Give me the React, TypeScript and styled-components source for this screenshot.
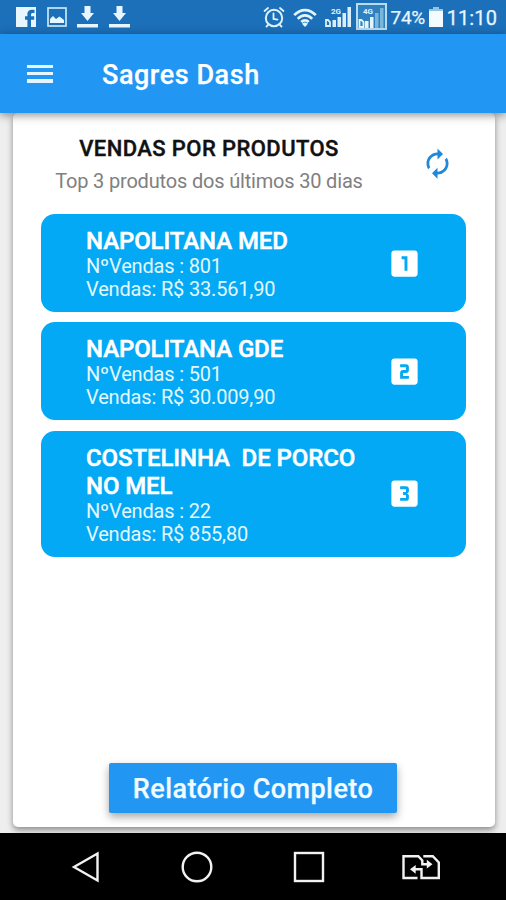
import React from "react";
import styled, { createGlobalStyle } from "styled-components";
import { MdAutorenew, MdLooks3, MdLooksOne, MdLooksTwo } from "react-icons/md";

const GlobalStyle = createGlobalStyle`
  * { box-sizing: border-box; }
  body { margin: 0; font-family: Roboto, "Liberation Sans", sans-serif; }
  svg { display: block; flex: none; }
`;

const Screen = styled.div`
  width: 506px;
  height: 900px;
  display: flex;
  flex-direction: column;
  overflow: hidden;
  background: #eeeeee;
`;

const StatusBar = styled.header`
  height: 34px;
  flex: none;
  display: flex;
  align-items: center;
  justify-content: space-between;
  padding: 0 9px 0 16px;
  background: #1b70b9;
  color: #e8f6ff;
`;

const StatusGroup = styled.div<{ $gap: number }>`
  display: flex;
  align-items: center;
  gap: ${(p) => p.$gap}px;
`;

const StatusText = styled.span<{ $size: number; $spacing: number }>`
  font-size: ${(p) => p.$size}px;
  line-height: 34px;
  letter-spacing: ${(p) => p.$spacing}px;
  padding-top: 2px;
  -webkit-text-stroke: 0.25px #e8f6ff;
`;

const AppBar = styled.nav`
  height: 79px;
  flex: none;
  display: flex;
  align-items: center;
  gap: 49px;
  padding-left: 27px;
  background: #2196f3;
  box-shadow: 0 2px 9px rgba(0, 0, 0, 0.45);
  position: relative;
  z-index: 1;
`;

const AppTitle = styled.h1`
  margin: 2px 0 0;
  font-size: 27px;
  font-weight: 500;
  line-height: 32px;
  letter-spacing: 0.55px;
  color: #fff;
  -webkit-text-stroke: 0.25px #fff;
`;

const MenuButton = styled.button`
  border: 0;
  padding: 0;
  width: 26px;
  height: 18px;
  display: flex;
  flex-direction: column;
  justify-content: space-between;
  background: none;
`;

const MenuLine = styled.span`
  height: 3.5px;
  background: #e6f5ff;
`;

const Body = styled.main`
  height: 720px;
  flex: none;
  padding: 0 11px 6px 13px;
`;

const Card = styled.section`
  height: 714px;
  display: flex;
  flex-direction: column;
  padding: 0 29px 14px 28px;
  border-radius: 5px;
  background: #fff;
  box-shadow: 0 3px 6px rgba(0, 0, 0, 0.42);
`;

const CardHeader = styled.div`
  height: 101px;
  display: flex;
  justify-content: space-between;
  padding: 22px 12px 0 13px;
`;

const Headings = styled.div`
  width: 310px;
  display: flex;
  flex-direction: column;
  align-items: center;
  white-space: nowrap;
`;

const CardTitle = styled.h2`
  margin: 0;
  font-size: 22px;
  font-weight: 500;
  line-height: 28px;
  letter-spacing: 0.42px;
  color: #111;
  -webkit-text-stroke: 0.4px #111;
`;

const CardSubtitle = styled.p`
  margin: 5px 0 0;
  font-size: 20px;
  line-height: 26px;
  letter-spacing: -0.18px;
  color: #808080;
`;

const RefreshButton = styled.button`
  border: 0;
  padding: 11px 0 0;
  height: 45px;
  background: none;
  color: #1f88d8;
`;

const ProductList = styled.ol`
  list-style: none;
  margin: 0;
  padding: 0;
  display: flex;
  flex-direction: column;
  gap: 10.4px;
`;

const ProductTile = styled.li`
  display: flex;
  align-items: center;
  justify-content: space-between;
  padding: 12px 44.5px 12px 45px;
  border-radius: 14px;
  background: #03a9f4;
  color: #fff;
`;

const ProductName = styled.h3`
  margin: 0;
  font-size: 24px;
  font-weight: 500;
  line-height: 28px;
  letter-spacing: -0.1px;
  white-space: pre-wrap;
  -webkit-text-stroke: 0.5px #fff;
`;

const ProductInfo = styled.div`
  width: 290px;
  padding-top: 1px;
  margin-bottom: -1px;
`;

const ProductStat = styled.p`
  margin: 0;
  font-size: 20px;
  line-height: 23px;
  letter-spacing: -0.17px;
  color: #e3f8ff;
`;

const ReportButton = styled.button`
  width: 288px;
  height: 50px;
  margin: auto auto 0 68px;
  padding: 2px 0 0;
  border: 0;
  border-radius: 2px;
  background: #2196f3;
  color: #f2fbff;
  font: 500 27px/32px Roboto, "Liberation Sans", sans-serif;
  letter-spacing: 0.45px;
  white-space: nowrap;
  box-shadow: 0 4px 9px rgba(0, 0, 0, 0.35);
  -webkit-text-stroke: 0.25px #f2fbff;
`;

const SystemNav = styled.footer`
  height: 67px;
  flex: none;
  display: flex;
  align-items: center;
  padding-left: 71px;
  background: #000;
  position: relative;
  z-index: 1;
`;

const NavIcon = styled.svg`
  fill: none;
  stroke: #f2f2f2;
  stroke-width: 2.4;
`;

const FacebookIcon = () => (
  <svg width="20" height="20" viewBox="0 0 20 20">
    <path fill="#e8f6ff" fillRule="evenodd" d="M0 0h20v20h-5v-7.3h3.2V9.3H15V7.7c0-1.2.6-1.7 1.8-1.7h1.7V2.7h-2.6c-3 0-4.5 1.6-4.5 4.4v2.2H9v3.4h2.4V20H0z" />
  </svg>
);

const PictureIcon = () => (
  <svg width="20" height="20" viewBox="0 0 20 20">
    <rect x="1" y="1" width="18" height="18" fill="none" stroke="#c6e7f7" strokeWidth="1.7" />
    <path fill="#e8f6ff" d="M3 16v-4l3-3 3 3 3.5-2.5L17 13v3z" />
  </svg>
);

const DownloadIcon = () => (
  <svg width="21" height="22" viewBox="0 0 21 22">
    <path fill="#e8f6ff" d="M7.5 0h6v7H17l-6.5 8L4 7h3.5zM0 18h21v3.5H0z" />
  </svg>
);

const AlarmIcon = () => (
  <svg width="22" height="22" viewBox="0 0 22 22" fill="none" stroke="#dff2fb" strokeWidth="2" strokeLinecap="round">
    <circle cx="11" cy="12" r="8.2" />
    <path d="M10.5 7.5V13l4 .7M1.5 5 5 2M17 2l3.5 3M5 19l-1.5 1.5M17 19l1.5 1.5" strokeWidth="1.8" />
  </svg>
);

const WifiIcon = () => (
  <svg width="24" height="19" viewBox="0 0 24 19" fill="none" stroke="#e2f4fc" strokeWidth="2.7">
    <path d="M1.2 7.2c6.2-6.9 15.4-6.9 21.6 0M4.8 10.8c4.2-4.5 10.2-4.5 14.4 0M8.3 14c2.1-2.2 5.3-2.2 7.4 0" />
    <path d="m12 19-3-3.2c1.8-1.7 4.2-1.7 6 0z" fill="#e2f4fc" stroke="none" />
  </svg>
);

const SignalLabel = styled.text`
  font: 700 8px Roboto, "Liberation Sans", sans-serif;
  fill: #e1f4fb;
`;

const Signal2G = () => (
  <svg width="27" height="22" viewBox="0 0 27 22">
    <path d="M1 14h2l2 2v4H1z" fill="none" stroke="#d9effa" strokeWidth="1.8" />
    <path fill="#d9effa" d="M7.5 14H11v7H7.5zM12.5 11H16v10h-3.5zM17.5 7H21v14h-3.5zM22.5 1H26v20h-3.5z" />
    <SignalLabel x="6" y="8">2G</SignalLabel>
  </svg>
);

const Signal4G = () => (
  <svg width="31" height="28" viewBox="0 0 31 28">
    <rect x="1" y="1" width="29" height="25" fill="#2f80c0" stroke="#b8dcec" strokeWidth="2" />
    <path d="M3.5 17h2l2 2v5h-4z" fill="none" stroke="#e5f5fb" strokeWidth="1.8" />
    <path fill="#e5f5fb" d="M9 18h3.5v7H9zM14 14h3.5v11H14z" />
    <path fill="#79b6dc" d="M19 10h3.5v15H19zM24 5h3.5v20H24z" />
    <SignalLabel x="7" y="11">4G</SignalLabel>
  </svg>
);

const BatteryIcon = () => (
  <svg width="14" height="20" viewBox="0 0 14 20">
    <path fill="#96c4df" d="M4 0h6v2h4v4H0V2h4z" />
    <path fill="#f4fcff" d="M0 4h14v16H0z" />
  </svg>
);

const BackIcon = styled(NavIcon)``;
const HomeIcon = styled(NavIcon)`margin-left: 81px;`;
const RecentsIcon = styled(NavIcon)`margin-left: 80px;`;
const SimIcon = styled(NavIcon)`margin-left: 76px;`;

const products = [
  { name: "NAPOLITANA MED", count: "801", total: "33.561,90", Rank: MdLooksOne },
  { name: "NAPOLITANA GDE", count: "501", total: "30.009,90", Rank: MdLooksTwo },
  { name: "COSTELINHA  DE PORCO NO MEL", count: "22", total: "855,80", Rank: MdLooks3 },
];

export default function App() {
  return (
    <>
      <GlobalStyle />
      <Screen>
        <StatusBar>
          <StatusGroup $gap={10.5}>
            <FacebookIcon />
            <PictureIcon />
            <DownloadIcon />
            <DownloadIcon />
          </StatusGroup>
          <StatusGroup $gap={4}>
            <StatusGroup $gap={8}>
              <AlarmIcon />
              <WifiIcon />
              <Signal2G />
            </StatusGroup>
            <Signal4G />
            <StatusText $size={19} $spacing={-0.4}>74%</StatusText>
            <BatteryIcon />
            <StatusText $size={20} $spacing={0.1}>11:10</StatusText>
          </StatusGroup>
        </StatusBar>
        <AppBar>
          <MenuButton aria-label="Menu">
            <MenuLine />
            <MenuLine />
            <MenuLine />
          </MenuButton>
          <AppTitle>Sagres Dash</AppTitle>
        </AppBar>
        <Body>
          <Card>
            <CardHeader>
              <Headings>
                <CardTitle>VENDAS POR PRODUTOS</CardTitle>
                <CardSubtitle>Top 3 produtos dos últimos 30 dias</CardSubtitle>
              </Headings>
              <RefreshButton aria-label="Atualizar">
                <MdAutorenew size={33} />
              </RefreshButton>
            </CardHeader>
            <ProductList>
              {products.map(({ name, count, total, Rank }) => (
                <ProductTile key={name}>
                  <ProductInfo>
                    <ProductName>{name}</ProductName>
                    <ProductStat>NºVendas : {count}</ProductStat>
                    <ProductStat>Vendas: R$ {total}</ProductStat>
                  </ProductInfo>
                  <Rank size={35} />
                </ProductTile>
              ))}
            </ProductList>
            <ReportButton>Relatório Completo</ReportButton>
          </Card>
        </Body>
        <SystemNav>
          <BackIcon width="29" height="34" viewBox="0 0 29 34">
            <path d="M26.5 3.5v27L3 17z" />
          </BackIcon>
          <HomeIcon width="32" height="34" viewBox="0 0 32 34">
            <circle cx="16" cy="17" r="14.3" />
          </HomeIcon>
          <RecentsIcon width="32" height="34" viewBox="0 0 32 34">
            <rect x="2" y="3" width="28" height="28" />
          </RecentsIcon>
          <SimIcon width="40" height="28" viewBox="0 0 40 28">
            <path d="M16.5 25H2.5V3.2h14.8l4 4.3v3.7h7M22.3 3.2h9.5l6 6.3V25H20.5v-8.7h-8" />
            <path d="m25.8 6.8 5.7 4.4-5.7 4.4zM14.7 11.9 9 16.3l5.7 4.4z" fill="#f2f2f2" stroke="none" />
          </SimIcon>
        </SystemNav>
      </Screen>
    </>
  );
}
